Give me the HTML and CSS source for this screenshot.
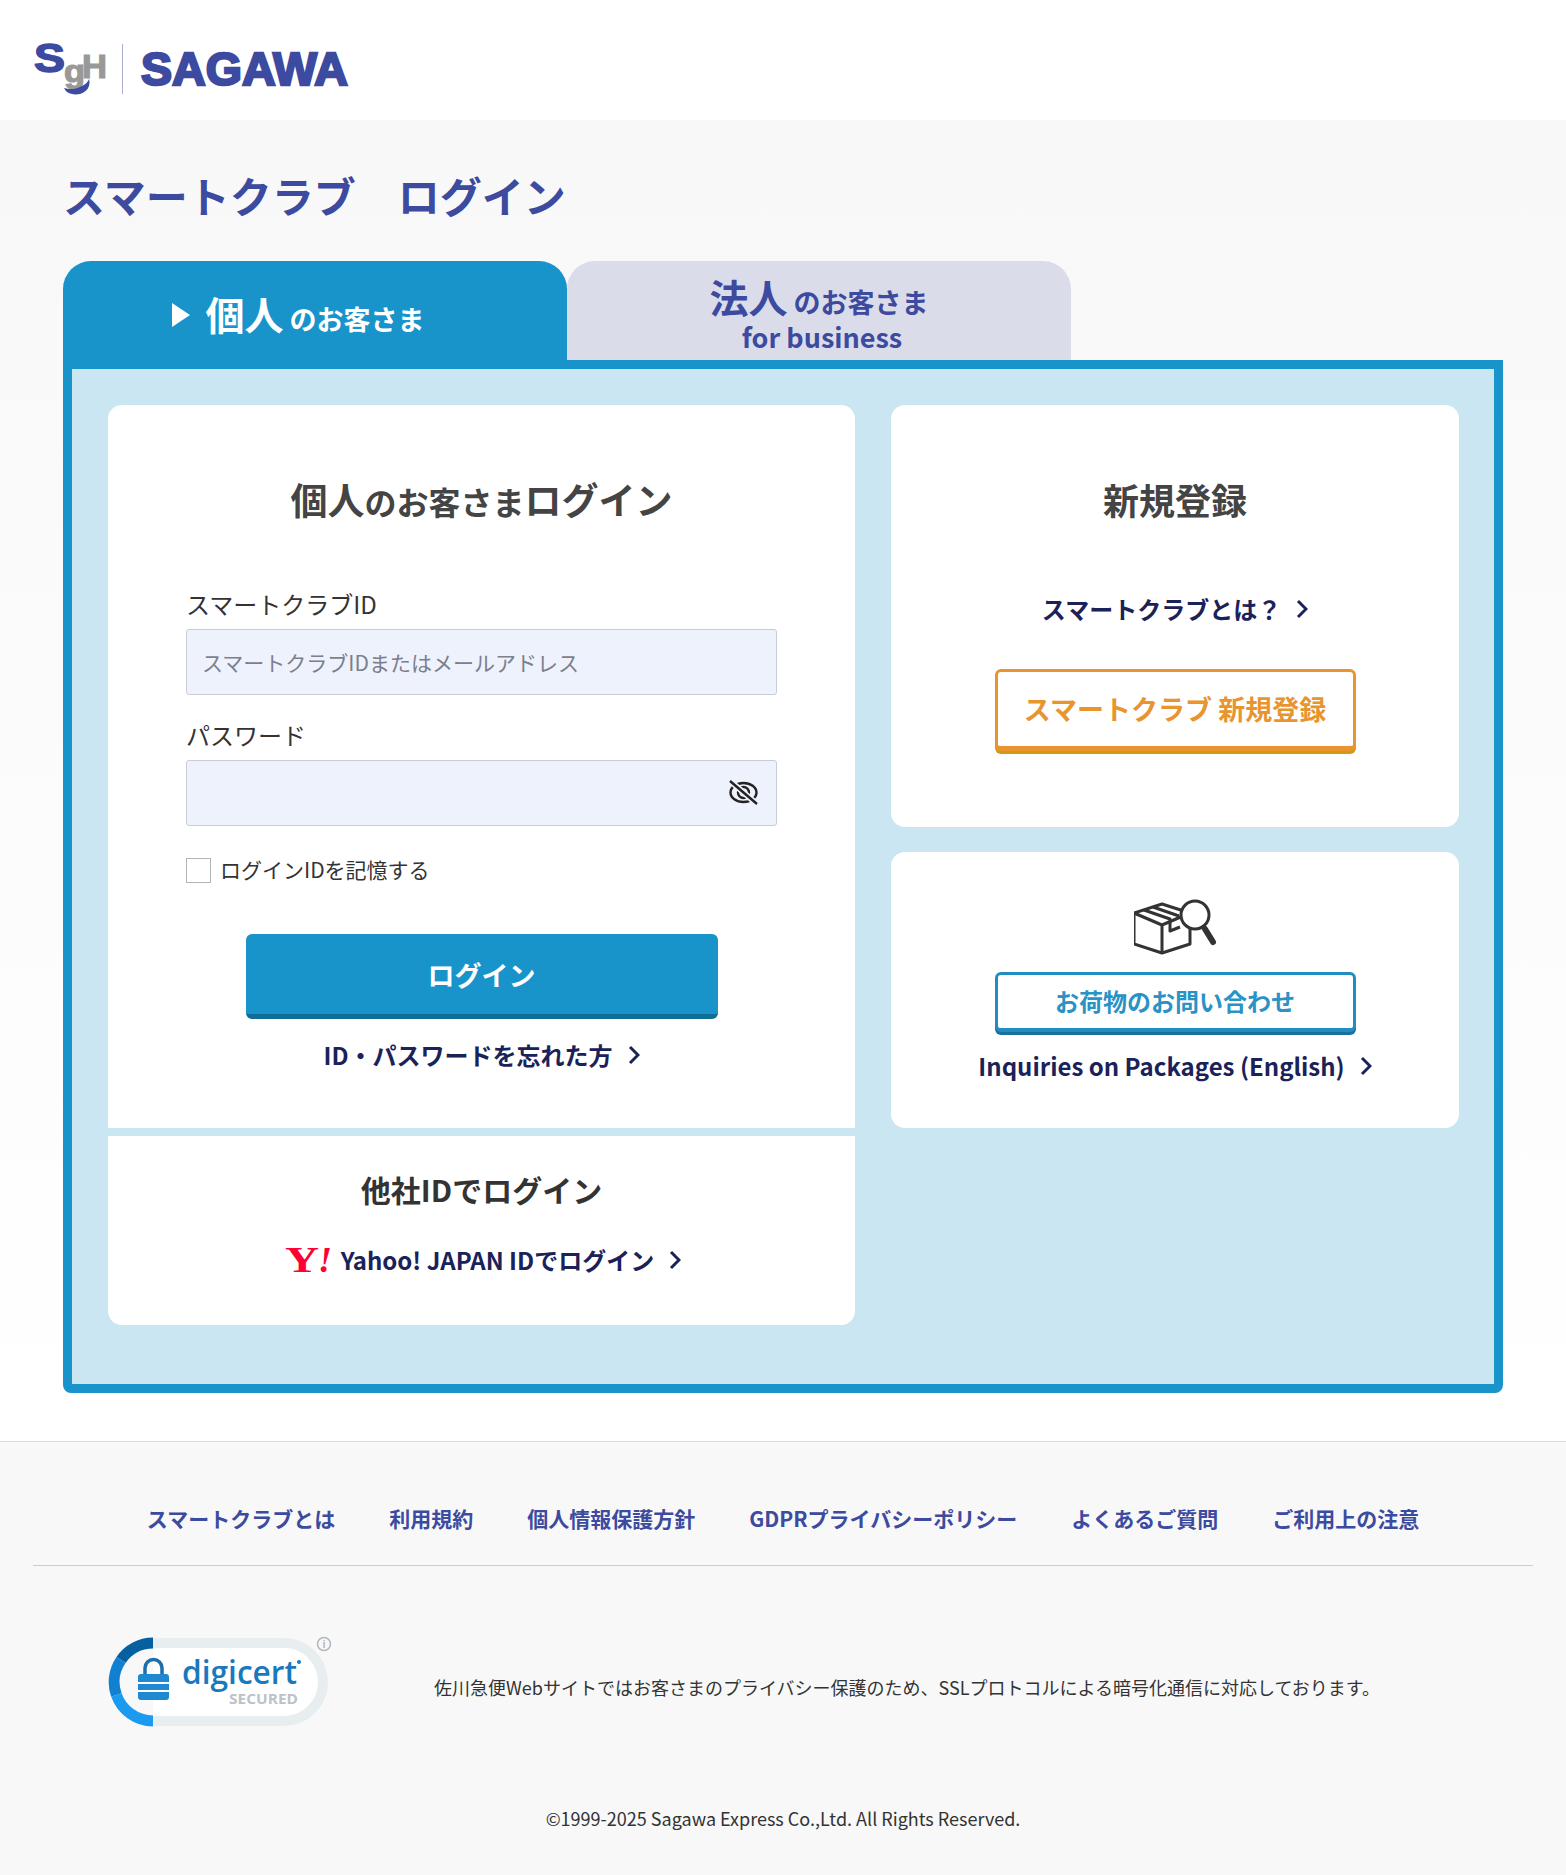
FILE: index.html
```html
<!DOCTYPE html>
<html lang="ja">
<head>
	<meta charset="utf-8">
	<title>スマートクラブ ログイン</title>
	<link rel="stylesheet" href="styles.css">
</head>
<body>
	<header class="siteHead">
		<svg class="logo" width="316" height="76" viewBox="0 -12 316 76">
			<text x="0" y="30" class="logoS" textLength="31" lengthAdjust="spacingAndGlyphs">S</text>
			<text x="30" y="40" class="logoG" textLength="21" lengthAdjust="spacingAndGlyphs">g</text>
			<text x="48" y="36" class="logoH" textLength="25" lengthAdjust="spacingAndGlyphs">H</text>
			<path d="M30 46c6 2 12 1 16-1 5-2 8-5 9-8 2 7-2 13-9 15-5 1-10 0-13-2-1-1-2-2-3-4z" fill="#3c4a9f"/>
			<rect x="88" y="2" width="1" height="50" fill="#a9aed2"/>
			<text x="107" y="43" class="logoName" textLength="207" lengthAdjust="spacingAndGlyphs">SAGAWA</text>
		</svg>
	</header>

	<main class="content">
		<h1 class="pageTitle">スマートクラブ　ログイン</h1>

		<div class="tabs">
			<div class="tab tabActive">
				<svg class="tabArrow" width="18" height="24" viewBox="0 0 18 24"><path d="M0 0l18 12L0 24z" fill="#fff"/></svg>
				<div class="tabText"><span class="tabBig">個人</span><span class="tabSmall">のお客さま</span></div>
			</div>
			<div class="tab tabOther">
				<div class="tabLine"><span class="tabBig">法人</span><span class="tabSmall">のお客さま</span></div>
				<div class="tabSub">for business</div>
			</div>
		</div>

		<div class="panel">
			<div class="leftCol">
				<section class="card loginCard">
					<h2 class="cardTitle loginTitle">個人<small>のお客さま</small>ログイン</h2>
					<label class="fieldLabel firstLabel">スマートクラブID</label>
					<input class="textInput" type="text" placeholder="スマートクラブIDまたはメールアドレス">
					<label class="fieldLabel">パスワード</label>
					<div class="pwWrap">
						<input class="textInput" type="password">
						<svg class="eyeIcon" width="32" height="26" viewBox="0 0 32 26" fill="none" stroke="#222" stroke-width="2.400">
							<ellipse cx="15.500" cy="12.500" rx="13" ry="9.500"/>
							<circle cx="15.500" cy="12.500" r="5.500"/>
							<path d="M1 0l29 25" stroke="#eef2fd" stroke-width="6"/>
							<path d="M2 1l27 23" stroke-width="2.400"/>
						</svg>
					</div>
					<div class="rememberRow">
						<span class="checkBox"></span>
						<span class="rememberText">ログインIDを記憶する</span>
					</div>
					<a class="loginBtn">ログイン</a>
					<a class="moreLink forgotLink">ID・パスワードを忘れた方
						<svg class="chev" width="12" height="20" viewBox="0 0 12 20"><path d="M2 2l8 8-8 8" fill="none" stroke="#1a2259" stroke-width="3"/></svg>
					</a>
				</section>
				<section class="card otherCard">
					<h3 class="otherTitle">他社IDでログイン</h3>
					<a class="moreLink yahooLink">
						<svg class="yahooMark" width="48" height="40" viewBox="0 0 48 40">
							<text x="0" y="32" class="yahooY" textLength="34" lengthAdjust="spacingAndGlyphs">Y</text>
							<text x="33" y="32" class="yahooBang" textLength="14" lengthAdjust="spacingAndGlyphs">!</text>
						</svg>
						Yahoo! JAPAN IDでログイン
						<svg class="chev" width="12" height="20" viewBox="0 0 12 20"><path d="M2 2l8 8-8 8" fill="none" stroke="#1a2259" stroke-width="3"/></svg>
					</a>
				</section>
			</div>

			<div class="rightCol">
				<section class="card registerCard">
					<h2 class="cardTitle">新規登録</h2>
					<a class="moreLink aboutLink">スマートクラブとは？
						<svg class="chev" width="12" height="20" viewBox="0 0 12 20"><path d="M2 2l8 8-8 8" fill="none" stroke="#1a2259" stroke-width="3"/></svg>
					</a>
					<a class="outlineBtn orangeBtn">スマートクラブ 新規登録</a>
				</section>
				<section class="card trackCard">
					<svg class="boxIcon" width="84" height="56" viewBox="14 12 84 56" fill="none" stroke="#333" stroke-width="3" stroke-linejoin="round">
						<path d="M14 26l28-9 28 9v31l-28 9-28-9z"/>
						<path d="M14 26l28 12 28-12M42 38v28"/>
						<path d="M24 23l26 9v12l10-4M33 20l26 9"/>
						<circle cx="75" cy="28" r="14" fill="#fff"/>
						<path d="M85 42l8 13" stroke-width="6" stroke-linecap="round"/>
					</svg>
					<a class="outlineBtn blueBtn">お荷物のお問い合わせ</a>
					<a class="moreLink englishLink">Inquiries on Packages (English)
						<svg class="chev" width="12" height="20" viewBox="0 0 12 20"><path d="M2 2l8 8-8 8" fill="none" stroke="#1a2259" stroke-width="3"/></svg>
					</a>
				</section>
			</div>
		</div>
	</main>

	<footer class="siteFoot">
		<nav class="footNav">
			<a>スマートクラブとは</a>
			<a>利用規約</a>
			<a>個人情報保護方針</a>
			<a>GDPRプライバシーポリシー</a>
			<a>よくあるご質問</a>
			<a>ご利用上の注意</a>
		</nav>
		<div class="sslRow">
			<svg class="certBadge" width="226" height="92" viewBox="0 0 226 92">
				<path d="M45 7h131a39 39 0 0 1 0 78H45" fill="#fff" stroke="#e8edf0" stroke-width="10"/>
				<path d="M45 7a39 39 0 0 0-32 17" fill="none" stroke="#065f9f" stroke-width="11"/>
				<path d="M13 24a39 39 0 0 0-4.600 35" fill="none" stroke="#1180d0" stroke-width="11"/>
				<path d="M8.400 59a39 39 0 0 0 36.600 26" fill="none" stroke="#1a9bf0" stroke-width="11"/>
				<path d="M37 38v-6a8.500 8.500 0 0 1 17 0v6" fill="none" stroke="#1b6fae" stroke-width="3.500"/>
				<rect x="30" y="38" width="31" height="26" rx="3" fill="#1e88d0"/>
				<path d="M30 47h31M30 55h31" stroke="#fff" stroke-width="2"/>
				<text x="74" y="48" class="certName" textLength="115" lengthAdjust="spacingAndGlyphs">digicert</text>
				<circle cx="191" cy="26" r="2" fill="#1a78bd"/>
				<text x="121" y="68" class="certSub" textLength="69" lengthAdjust="spacingAndGlyphs">SECURED</text>
				<circle cx="216" cy="8" r="6.500" fill="#f8f8f8" stroke="#b4b9bd" stroke-width="1.500"/>
				<text x="216" y="12" class="certInfo">i</text>
			</svg>
			<p class="sslText">佐川急便Webサイトではお客さまのプライバシー保護のため、SSLプロトコルによる暗号化通信に対応しております。</p>
		</div>
		<p class="copyright">©1999-2025 Sagawa Express Co.,Ltd. All Rights Reserved.</p>
	</footer>
</body>
</html>
```

FILE: styles.css
```css
* { box-sizing: border-box; }

body {
	margin: 0;
	background: #f8f8f8;
	color: #333;
	font-family: "Noto Sans CJK JP", "Noto Sans", sans-serif;
}

a { text-decoration: none; }

.siteHead {
	height: 120px;
	background: #fff;
	padding: 30px 0 0 34px;
}

.logo { display: block; }

.logoS, .logoG, .logoH, .logoName {
	font-family: "Liberation Sans", sans-serif;
	font-weight: bold;
}
.logoS { font-size: 40px; fill: #3c4a9f; stroke: #3c4a9f; stroke-width: 1.500px; }
.logoG { font-size: 32px; fill: #999; stroke: #999; stroke-width: 1.200px; }
.logoH { font-size: 34px; fill: #999; stroke: #999; stroke-width: 1.200px; }
.logoName { font-size: 47px; fill: #3c4a9f; stroke: #3c4a9f; stroke-width: 2.400px; }

.content {
	padding: 45px 63px 48px;
	background: linear-gradient(#f8f8f8, #fff);
}

.pageTitle {
	margin: 0 0 36px;
	font-size: 42px;
	line-height: 60px;
	font-weight: 700;
	color: #3c4a9f;
}

.tabs {
	display: flex;
	height: 99px;
	align-items: stretch;
}

.tab {
	width: 504px;
	border-radius: 28px 28px 0 0;
	text-align: center;
}

.tabActive {
	display: flex;
	justify-content: center;
	align-items: center;
	padding: 0 33px 0 0;
	height: 108px;
	background: #1994cb;
	color: #fff;
}

.tabOther {
	padding-top: 11px;
	background: #dadcea;
	color: #3c4a9f;
}

.tabText { margin-top: -5px; }
.tabArrow { margin-right: 15px; }
.tabLine { line-height: 48px; height: 48px; }
.tabBig { font-size: 39px; font-weight: 700; margin-right: 6px; }
.tabSmall { font-size: 27px; font-weight: 700; }
.tabSub { font-size: 27px; font-weight: 700; line-height: 34px; padding-left: 6px; }

.panel {
	display: grid;
	grid-template-columns: 747px 568px;
	column-gap: 36px;
	height: 1033px;
	padding: 36px 35px 0 36px;
	background: #c9e6f2;
	border: 9px solid #1994cb;
	border-radius: 0 0 8px 8px;
}

.leftCol, .rightCol {
	display: flex;
	flex-direction: column;
}
.leftCol { gap: 8px; }
.rightCol { gap: 25px; }

.card {
	display: flex;
	flex-direction: column;
	align-items: center;
	background: #fff;
	border-radius: 14px;
}

.cardTitle {
	margin: 0;
	font-size: 36px;
	line-height: 54px;
	font-weight: 700;
	color: #444;
}
.loginTitle { font-size: 37px; }
.cardTitle small { font-size: 32px; }

.loginCard {
	height: 723px;
	padding: 67px 78px 0;
	border-radius: 14px 14px 0 0;
}

.fieldLabel {
	align-self: stretch;
	margin: 22px 0 7px;
	font-size: 24px;
	line-height: 36px;
	color: #333;
}
.firstLabel { margin-top: 58px; }

.textInput {
	display: block;
	width: 100%;
	height: 66px;
	padding: 0 15px;
	background: #eef2fd;
	border: 1px solid #c9ccd8;
	border-radius: 3px;
	font: 400 21px "Noto Sans CJK JP", sans-serif;
}
.textInput::placeholder { color: #7c7f8c; opacity: 1; }

.pwWrap {
	position: relative;
	align-self: stretch;
}
.eyeIcon {
	position: absolute;
	right: 17px;
	top: 20px;
}

.rememberRow {
	display: flex;
	align-items: center;
	align-self: stretch;
	gap: 9px;
	height: 28px;
	margin-top: 30px;
	font-size: 21px;
	line-height: 30px;
}
.rememberText { margin-top: -3px; }

.checkBox {
	width: 25px;
	height: 25px;
	background: #fff;
	border: 1px solid #b5b5b5;
}

.loginBtn {
	display: block;
	width: 472px;
	height: 85px;
	margin-top: 50px;
	background: #1994cb;
	border-bottom: 5px solid #0f6d96;
	border-radius: 6px;
	color: #fff;
	font-size: 27px;
	font-weight: 700;
	line-height: 82px;
	text-align: center;
}

.moreLink {
	display: flex;
	align-items: center;
	justify-content: center;
	color: #1a2259;
	font-size: 24px;
	font-weight: 700;
	line-height: 36px;
}
.chev { margin-left: 15px; }

.forgotLink { margin-top: 18px; }

.otherCard {
	height: 189px;
	padding-top: 31px;
	border-radius: 0 0 14px 14px;
}
.otherTitle {
	margin: 0;
	font-size: 30px;
	line-height: 44px;
	font-weight: 700;
	color: #333;
}
.yahooLink { margin-top: 29px; padding-left: 3px; }
.yahooMark { margin-right: 8px; }
.yahooY {
	font-family: "Liberation Serif", serif;
	font-weight: bold;
	font-size: 36px;
	fill: #f03;
}
.yahooBang {
	font-family: "Liberation Serif", serif;
	font-weight: bold;
	font-style: italic;
	font-size: 36px;
	fill: #f03;
}

.registerCard {
	height: 422px;
	padding-top: 67px;
}
.aboutLink { margin-top: 65px; }

.outlineBtn {
	display: block;
	width: 361px;
	background: #fff;
	border: 3px solid;
	border-radius: 6px;
	font-weight: 700;
	text-align: center;
}
.orangeBtn {
	height: 82px;
	margin-top: 42px;
	border-color: #e89530;
	border-bottom-width: 5px;
	box-shadow: 0 3px 0 #cf9a14;
	color: #e89530;
	font-size: 27px;
	line-height: 74px;
}
.blueBtn {
	height: 60px;
	margin-top: 17px;
	border-color: #1f8fc2;
	border-bottom-width: 4px;
	box-shadow: 0 3px 0 #1a6f9c;
	color: #2a93c6;
	font-size: 24px;
	line-height: 52px;
}

.trackCard {
	height: 276px;
	padding-top: 47px;
}
.boxIcon { margin-left: 2px; }
.englishLink { margin-top: 16px; }

.siteFoot {
	padding: 0 33px 30px;
	border-top: 1px solid #ddd;
}

.footNav {
	display: flex;
	justify-content: center;
	gap: 54px;
	padding: 58px 0 29px;
	border-bottom: 1px solid #ccc;
}
.footNav a {
	color: #3c4a9f;
	font-size: 21px;
	font-weight: 700;
	line-height: 36px;
}

.sslRow {
	display: flex;
	align-items: center;
	padding: 70px 0 0 75px;
}
.certBadge { flex: none; }
.sslText {
	margin: 10px 0 0 100px;
	font-size: 18px;
	line-height: 28px;
	color: #333;
}
.certName {
	font-family: "Open Sans", sans-serif;
	font-size: 33px;
	font-weight: 600;
	fill: #1a78bd;
}
.certSub {
	font-family: "Open Sans", sans-serif;
	font-size: 14px;
	font-weight: 700;
	fill: #bcc2c7;
}
.certInfo {
	font-family: "Liberation Sans", sans-serif;
	font-size: 11px;
	font-weight: 700;
	text-anchor: middle;
	fill: #b4b9bd;
}

.copyright {
	margin: 76px 0 0;
	font-size: 18px;
	line-height: 28px;
	text-align: center;
	color: #333;
}
```
